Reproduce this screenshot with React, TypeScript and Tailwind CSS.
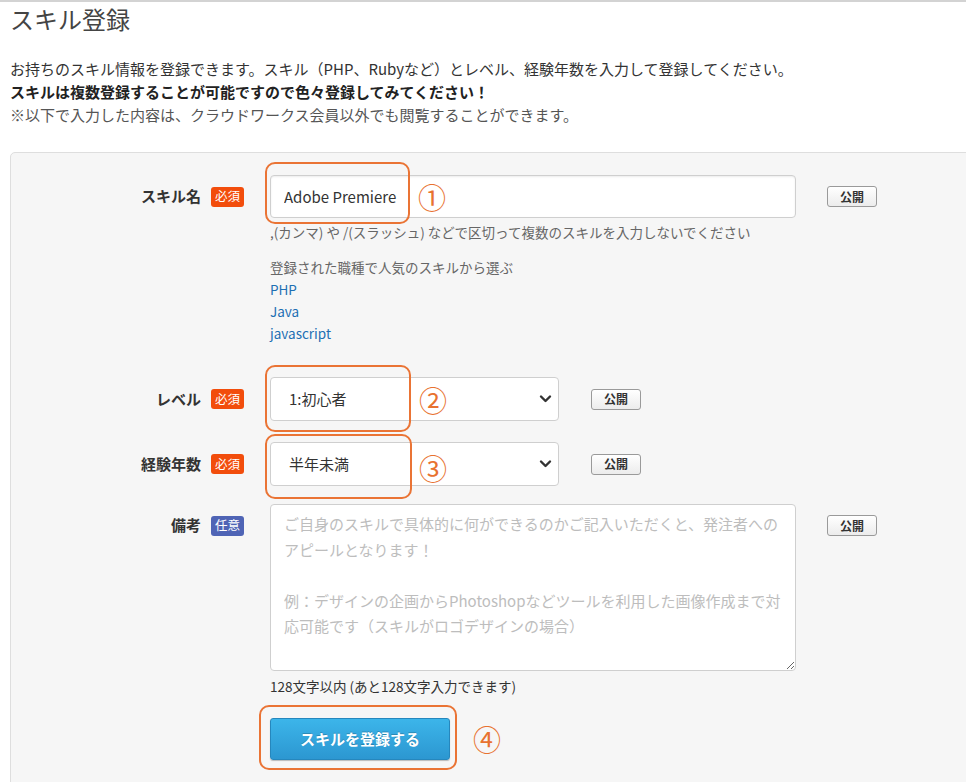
import React from "react";

const FONT = '"Noto Sans CJK JP", "Noto Sans", sans-serif';

function Badge({ kind }: { kind: "req" | "opt" }) {
  return kind === "req" ? (
    <span className="inline-flex h-[20px] w-[33px] items-center justify-center rounded-[3px] bg-[#f24d0c] text-[12.5px] leading-none text-white">
      必須
    </span>
  ) : (
    <span className="inline-flex h-[20px] w-[33px] items-center justify-center rounded-[3px] bg-[#4f64b5] text-[12.5px] leading-none text-white">
      任意
    </span>
  );
}

function PublicBtn() {
  return (
    <button className="flex h-[21px] w-[50px] items-center justify-center rounded-[3px] border border-[#9a9a9a] bg-gradient-to-b from-white to-[#ececec] text-[12px] font-bold leading-none text-[#333]">
      公開
    </button>
  );
}

function Label({ text, kind }: { text: string; kind: "req" | "opt" }) {
  return (
    <div className="flex h-[43px] w-[259px] shrink-0 items-center justify-end gap-[10px] pr-[26px]">
      <span className="text-[15px] font-bold text-[#333]">{text}</span>
      <Badge kind={kind} />
    </div>
  );
}

function Mark({ n, className }: { n: string; className: string }) {
  return (
    <span
      className={
        "pointer-events-none absolute text-[28px] leading-none text-[#e8722f] " +
        className
      }
    >
      {n}
    </span>
  );
}

function Chevron() {
  return (
    <svg
      className="pointer-events-none absolute right-[7px] top-1/2 -translate-y-1/2"
      width="13"
      height="9"
      viewBox="0 0 13 9"
    >
      <path d="M2 2 L6.5 6.5 L11 2" fill="none" stroke="#333" strokeWidth="2.4" strokeLinecap="round" strokeLinejoin="round" />
    </svg>
  );
}

export default function App() {
  return (
    <div
      className="relative h-[782px] w-[966px] overflow-hidden border-t-2 border-[#d3d3d3] bg-white text-[#333]"
      style={{ fontFamily: FONT }}
    >
      <h1 className="mt-[3px] pl-[10px] text-[24px] font-normal leading-[28px] text-[#444]">
        スキル登録
      </h1>

      <div className="mt-[24px] pl-[10px] text-[15px] leading-[23px] text-[#333]">
        <p>
          お持ちのスキル情報を登録できます。スキル（PHP、Rubyなど）とレベル、経験年数を入力して登録してください。
        </p>
        <p className="font-bold text-[#222]">
          スキルは複数登録することが可能ですので色々登録してみてください！
        </p>
        <p className="text-[#555]">
          ※以下で入力した内容は、クラウドワークス会員以外でも閲覧することができます。
        </p>
      </div>

      <div className="ml-[10px] mt-[26px] w-[1000px] rounded-[5px] border border-[#dedede] bg-[#f6f6f6] pb-[40px] pt-[22px]">
        {/* skill name */}
        <div className="flex">
          <Label text="スキル名" kind="req" />
          <div className="w-[526px]">
            <div className="relative">
              <input
                readOnly
                value="Adobe Premiere"
                className="h-[43px] w-full rounded-[4px] border border-[#cfcfcf] bg-white pl-[13px] text-[15px] text-[#333] shadow-[inset_0_1px_2px_rgba(0,0,0,0.08)] outline-none"
                style={{ fontFamily: FONT }}
              />
              <div className="pointer-events-none absolute left-[-5px] top-[-13px] h-[62px] w-[145px] rounded-[10px] border-2 border-[#ea7435]" />
              <Mark n="①" className="left-[148px] top-[8px]" />
            </div>
            <p className="mt-[5px] text-[13.5px] leading-[18px] text-[#666]">
              ,(カンマ) や /(スラッシュ) などで区切って複数のスキルを入力しないでください
            </p>
            <div className="mt-[15px] text-[13.5px] leading-[22px]">
              <p className="text-[#666]">登録された職種で人気のスキルから選ぶ</p>
              <p className="text-[#1d6fb3]">PHP</p>
              <p className="text-[#1d6fb3]">Java</p>
              <p className="text-[#1d6fb3]">javascript</p>
            </div>
          </div>
          <div className="ml-[31px] mt-[11px]">
            <PublicBtn />
          </div>
        </div>

        {/* level */}
        <div className="mt-[33px] flex items-center">
          <Label text="レベル" kind="req" />
          <div className="relative w-[289px]">
            <select
              className="h-[44px] w-full appearance-none rounded-[4px] border border-[#cfcfcf] bg-white pl-[18px] text-[15px] text-[#333] outline-none"
              style={{ fontFamily: FONT }}
              defaultValue="1"
            >
              <option value="1">1:初心者</option>
            </select>
            <Chevron />
            <div className="pointer-events-none absolute left-[-5px] top-[-12px] h-[67px] w-[146px] rounded-[10px] border-2 border-[#ea7435]" />
            <Mark n="②" className="left-[149px] top-[9px]" />
          </div>
          <div className="ml-[32px]">
            <PublicBtn />
          </div>
        </div>

        {/* experience */}
        <div className="mt-[21px] flex items-center">
          <Label text="経験年数" kind="req" />
          <div className="relative w-[289px]">
            <select
              className="h-[44px] w-full appearance-none rounded-[4px] border border-[#cfcfcf] bg-white pl-[18px] text-[15px] text-[#333] outline-none"
              style={{ fontFamily: FONT }}
              defaultValue="0"
            >
              <option value="0">半年未満</option>
            </select>
            <Chevron />
            <div className="pointer-events-none absolute left-[-5px] top-[-8px] h-[65px] w-[147px] rounded-[10px] border-2 border-[#ea7435]" />
            <Mark n="③" className="left-[149px] top-[12px]" />
          </div>
          <div className="ml-[32px]">
            <PublicBtn />
          </div>
        </div>

        {/* note */}
        <div className="mt-[18px] flex">
          <Label text="備考" kind="opt" />
          <div className="w-[526px]">
            <textarea
              readOnly
              className="block h-[167px] w-full resize-y rounded-[4px] border border-[#cfcfcf] bg-white px-[13px] pt-[6px] text-[15px] leading-[25.5px] text-[#333] outline-none placeholder:text-[#bdbdbd]"
              style={{ fontFamily: FONT }}
              placeholder={
                "ご自身のスキルで具体的に何ができるのかご記入いただくと、発注者への\nアピールとなります！\n\n例：デザインの企画からPhotoshopなどツールを利用した画像作成まで対\n応可能です（スキルがロゴデザインの場合）"
              }
            />
            <p className="mt-[6px] text-[13.5px] leading-[18px] text-[#333]">
              128文字以内 (あと128文字入力できます)
            </p>
            <div className="relative mt-[23px] w-[180px]">
              <button
                className="flex h-[42px] w-[180px] items-center justify-center rounded-[3px] border border-[#2687bd] bg-gradient-to-b from-[#3cb5ea] to-[#2c97d1] text-[15px] font-bold text-white shadow-[0_1px_1px_rgba(0,0,0,0.25)]"
                style={{ fontFamily: FONT, textShadow: "0 -1px 0 rgba(0,0,0,0.2)" }}
              >
                スキルを登録する
              </button>
              <div className="pointer-events-none absolute left-[-11px] top-[-13px] h-[65px] w-[198px] rounded-[10px] border-2 border-[#ea7435]" />
              <Mark n="④" className="left-[203px] top-[7px]" />
            </div>
          </div>
          <div className="ml-[31px] mt-[11px]">
            <PublicBtn />
          </div>
        </div>
      </div>
    </div>
  );
}
